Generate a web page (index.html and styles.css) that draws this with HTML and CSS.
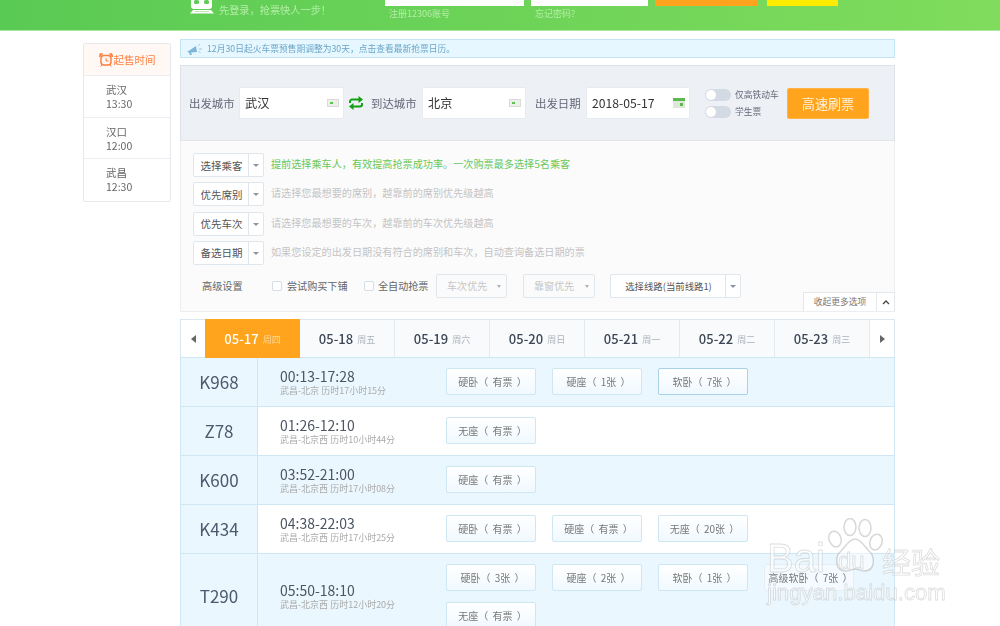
FILE: index.html
```html
<!DOCTYPE html>
<html lang="zh-CN">
<head>
<meta charset="utf-8">
<title>高速刷票</title>
<link rel="stylesheet" href="styles.css">
</head>
<body>
<header class="topbar">
  <div class="promo">
    <svg class="train-icon" viewBox="0 0 24 14" width="24" height="14"><path d="M1 0h21v6a3 3 0 0 1-3 3H4a3 3 0 0 1-3-3z" fill="#fff"/><rect x="4" y="0" width="5" height="4" rx="1.500" fill="#5fcd55"/><rect x="14" y="0" width="5" height="4" rx="1.500" fill="#5fcd55"/><path d="M0 13.500h24l-3-3.500H3z" fill="#fff"/><path d="M5 11h14v1H5z" fill="#bdeeb5"/></svg>
    <span>先登录，抢票快人一步！</span>
  </div>
  <div class="field field-user"><div class="field-box"></div><a>注册12306账号</a></div>
  <div class="field field-pass"><div class="field-box"></div><a>忘记密码?</a></div>
  <div class="top-btn top-orange"></div>
  <div class="top-btn top-yellow"></div>
</header>

<div class="page">
  <aside class="sale">
    <div class="sale-head">
      <svg viewBox="0 0 14 14" width="14" height="14"><rect x="2" y="2.500" width="10" height="9.500" rx="3" fill="none" stroke="#ff7f3f" stroke-width="1.500"/><path d="M7 5v3h2.500" fill="none" stroke="#ff7f3f"/><path d="M.5 4 3.500.8 1 .8zM13.500 4 10.500.8 13 .8zM3 12l-1.500 1.500M11 12l1.500 1.500" fill="#ff7f3f" stroke="#ff7f3f"/></svg>
      <span>起售时间</span>
    </div>
    <div class="sale-row">武汉<br>13:30</div>
    <div class="sale-row">汉口<br>12:00</div>
    <div class="sale-row">武昌<br>12:30</div>
  </aside>

  <main class="main">
    <div class="notice">
      <svg viewBox="0 0 16 12" width="16" height="12"><path d="M1 9 10 3l1 6-6 .5L6 12H4L3 9.500z" fill="#7db6d8"/><path d="M12 3l2-2M13 6h3M12.500 8.500l2 1" stroke="#9ccbe5" fill="none"/></svg>
      <span>12月30日起火车票预售期调整为30天，点击查看最新抢票日历。</span>
    </div>

    <section class="search">
      <label class="search-label">出发城市</label>
      <div class="search-input input-from"><span>武汉</span><i class="card-ico"></i></div>
      <svg class="swap" viewBox="0 0 14 14" width="14" height="14"><g fill="none" stroke="#12a012" stroke-width="2"><path d="M1 7V5.500a2 2 0 0 1 2-2h7"/><path d="M13 7v1.500a2 2 0 0 1-2 2H4"/></g><path d="M9.500 0 14 3.500 9.500 7zM4.500 7 0 10.500 4.500 14z" fill="#12a012"/></svg>
      <label class="search-label">到达城市</label>
      <div class="search-input"><span>北京</span><i class="card-ico"></i></div>
      <label class="search-label label-date">出发日期</label>
      <div class="search-input"><span>2018-05-17</span>
        <svg class="cal" viewBox="0 0 12 10" width="12" height="10"><rect width="12" height="10" fill="#dfe8d8"/><rect width="12" height="3" fill="#5bb94e"/><rect x="7" y="5" width="3" height="3" fill="#5bb94e"/></svg>
      </div>
      <div class="toggles">
        <div class="toggle-row"><i class="toggle"></i><span>仅高铁动车</span></div>
        <div class="toggle-row"><i class="toggle"></i><span>学生票</span></div>
      </div>
      <button class="go">高速刷票</button>
    </section>

    <section class="options">
      <div class="opt-row">
        <div class="split"><span class="split-main">选择乘客</span><span class="split-caret"></span></div>
        <p class="hint hint-green">提前选择乘车人，有效提高抢票成功率。一次购票最多选择5名乘客</p>
      </div>
      <div class="opt-row">
        <div class="split"><span class="split-main">优先席别</span><span class="split-caret"></span></div>
        <p class="hint">请选择您最想要的席别，越靠前的席别优先级越高</p>
      </div>
      <div class="opt-row">
        <div class="split"><span class="split-main">优先车次</span><span class="split-caret"></span></div>
        <p class="hint">请选择您最想要的车次，越靠前的车次优先级越高</p>
      </div>
      <div class="opt-row">
        <div class="split"><span class="split-main">备选日期</span><span class="split-caret"></span></div>
        <p class="hint">如果您设定的出发日期没有符合的席别和车次，自动查询备选日期的票</p>
      </div>
      <div class="adv">
        <span class="adv-title">高级设置</span>
        <span class="check check-a"><i></i>尝试购买下铺</span>
        <span class="check check-b"><i></i>全自动抢票</span>
        <span class="sel sel-a">车次优先</span>
        <span class="sel sel-b">靠窗优先</span>
        <div class="split split-line"><span class="split-main">选择线路(当前线路1)</span><span class="split-caret"></span></div>
      </div>
      <div class="collapse"><span class="collapse-text">收起更多选项</span><span class="collapse-arrow"><svg viewBox="0 0 8 5" width="8" height="5"><path d="M1 4l3-3 3 3" fill="none" stroke="#444" stroke-width="1.300"/></svg></span></div>
    </section>

    <nav class="tabs">
      <span class="tab-arrow"><i class="tri-left"></i></span>
      <a class="tab tab-on"><b>05-17</b><small>周四</small></a>
      <a class="tab"><b>05-18</b><small>周五</small></a>
      <a class="tab"><b>05-19</b><small>周六</small></a>
      <a class="tab"><b>05-20</b><small>周日</small></a>
      <a class="tab"><b>05-21</b><small>周一</small></a>
      <a class="tab"><b>05-22</b><small>周二</small></a>
      <a class="tab"><b>05-23</b><small>周三</small></a>
      <span class="tab-arrow tab-arrow-r"><i class="tri-right"></i></span>
    </nav>

    <div class="trains">
      <div class="train tint">
        <div class="no">K968</div>
        <div class="info"><div class="time">00:13-17:28</div><div class="sub">武昌-北京 历时17小时15分</div></div>
        <div class="seats"><span class="seat">硬卧（ 有票 ）</span><span class="seat">硬座（ 1张 ）</span><span class="seat seat-on">软卧（ 7张 ）</span></div>
      </div>
      <div class="train">
        <div class="no">Z78</div>
        <div class="info"><div class="time">01:26-12:10</div><div class="sub">武昌-北京西 历时10小时44分</div></div>
        <div class="seats"><span class="seat">无座（ 有票 ）</span></div>
      </div>
      <div class="train tint">
        <div class="no">K600</div>
        <div class="info"><div class="time">03:52-21:00</div><div class="sub">武昌-北京西 历时17小时08分</div></div>
        <div class="seats"><span class="seat">硬座（ 有票 ）</span></div>
      </div>
      <div class="train">
        <div class="no">K434</div>
        <div class="info"><div class="time">04:38-22:03</div><div class="sub">武昌-北京西 历时17小时25分</div></div>
        <div class="seats"><span class="seat">硬卧（ 有票 ）</span><span class="seat">硬座（ 有票 ）</span><span class="seat">无座（ 20张 ）</span></div>
      </div>
      <div class="train tint">
        <div class="no">T290</div>
        <div class="info"><div class="time">05:50-18:10</div><div class="sub">武昌-北京西 历时12小时20分</div></div>
        <div class="seats"><span class="seat">硬卧（ 3张 ）</span><span class="seat">硬座（ 2张 ）</span><span class="seat">软卧（ 1张 ）</span><span class="seat seat-faded">高级软卧（ 7张 ）</span><span class="seat">无座（ 有票 ）</span></div>
      </div>
    </div>
  </main>
</div>

<div class="watermark">
  <svg class="paw" viewBox="0 0 58 58" width="58" height="58"><g fill="rgba(255,255,255,.5)" stroke="rgba(140,140,140,.35)" stroke-width="1.500"><ellipse cx="9" cy="21" rx="6" ry="8" transform="rotate(-20 9 21)"/><ellipse cx="24" cy="9" rx="6" ry="8.500"/><ellipse cx="39" cy="10" rx="6" ry="8.500"/><ellipse cx="50" cy="24" rx="6" ry="8" transform="rotate(20 50 24)"/><path d="M29 21c-6 0-9 7-14 12-6 5-7 20 5 20 4 0 6-2 9-2s5 2 9 2c12 0 11-15 5-20-5-5-8-12-14-12z"/></g></svg>
  <span class="wm-bai">Bai</span>
  <span class="wm-du">du</span>
  <span class="wm-jy">经验</span>
  <span class="wm-url">jingyan.baidu.com</span>
</div>
</body>
</html>
```
FILE: styles.css
```css
* { box-sizing: border-box; }
html, body { margin: 0; height: 626px; overflow: hidden; background: #fff; }
body { position: relative; font-family: "Noto Sans CJK SC", "Open Sans", sans-serif; color: #555; font-size: 10.5px; }
a { text-decoration: none; }
i { display: block; font-style: normal; }
p { margin: 0; }
.topbar, .page, .watermark { filter: blur(.35px); }

/* top bar */
.topbar { height: 31px; display: flex; align-items: flex-start; padding-left: 190px; background: linear-gradient(90deg, #59ca54, #80dc5c); border-bottom: 1px solid #a9e89a; }
.promo { width: 195px; display: flex; align-items: flex-start; gap: 5px; color: #b4eda8; font-size: 10.2px; line-height: 16px; }
.promo span { margin-top: 1.5px; }
.train-icon { flex: none; }
.field a { display: block; padding-left: 4px; margin-top: 2px; font-size: 9px; line-height: 12px; color: #b4eda8; }
.field-box { height: 6px; background: #fff; }
.field-user { width: 139px; margin-right: 7px; }
.field-pass { width: 117px; margin-right: 7px; }
.top-btn { height: 6px; }
.top-orange { width: 103px; margin-right: 9px; background: #ffa41c; }
.top-yellow { width: 71px; background: #fdec00; }

/* page frame */
.page { display: flex; align-items: flex-start; padding: 8px 0 0 83px; gap: 9px; }

/* sale column */
.sale { width: 88px; margin-top: 4px; border: 1px solid #e5e8ec; border-radius: 2px; background: #fff; }
.sale-head { height: 32px; display: flex; align-items: center; justify-content: center; gap: 1px; background: #fff8f5; color: #ff7f3f; font-size: 10.5px; border-bottom: 1px solid #eceef1; }
.sale-row { height: 41.5px; padding: 7px 0 0 22px; font-size: 10.5px; line-height: 14px; color: #666; border-bottom: 1px solid #eceef1; }
.sale-row:last-child { border-bottom: 0; }

/* main column */
.main { width: 715px; }
.notice { height: 19px; display: flex; align-items: center; gap: 5px; padding-left: 5px; background: #e6f7ff; border: 1px solid #c3e5f4; color: #6aa6c8; font-size: 8.75px; }

/* search */
.search { height: 76px; margin-top: 7px; display: flex; align-items: center; padding: 0 25px 0 8px; background: #edf0f5; border: 1px solid #dde2e9; border-bottom-color: #e3e6ea; }
.search-label { width: 51px; font-size: 11.4px; color: #667; flex: none; }
.search-label:first-child { width: 50px; }
.search-input { width: 104px; height: 32px; flex: none; display: flex; align-items: center; justify-content: space-between; padding: 0 4px 0 5px; background: #fff; border: 1px solid #e7eaef; border-radius: 2px; font-size: 12.2px; color: #333; }
.input-from { width: 105px; }
.card-ico { position: relative; width: 12px; height: 8px; background: #edf0ea; border: 1px solid #d9dcd6; }
.card-ico::before { content: ""; position: absolute; left: 2px; top: 2px; width: 3px; height: 2px; background: #5bc44e; }
.swap { margin: 0 8px 0 5px; flex: none; }
.label-date { margin-left: 9px; }
.toggles { margin-left: 15px; width: 82px; flex: none; display: flex; flex-direction: column; gap: 5px; }
.toggle-row { height: 12px; display: flex; align-items: center; gap: 4px; font-size: 8.75px; color: #667; white-space: nowrap; }
.toggle { width: 26px; height: 12px; border-radius: 6px; background: #d3dae4; position: relative; flex: none; }
.toggle::before { content: ""; position: absolute; left: 1px; top: 1px; width: 10px; height: 10px; border-radius: 50%; background: #fff; }
.go { width: 82px; height: 31px; flex: none; padding: 0; border: 1px solid #ffb347; border-radius: 2px; background: #ffa41c; color: #fff3dc; font: inherit; font-size: 13.1px; }

/* options */
.options { position: relative; height: 171px; padding: 12px 0 0 12px; background: #fbfbfb; border: 1px solid #eceef1; border-top: 0; }
.opt-row { display: flex; align-items: center; gap: 7px; margin-bottom: 5.3px; }
.split { display: flex; height: 24px; flex: none; border: 1px solid #dfe6ec; border-radius: 2px; background: #fff; }
.split-main { display: flex; align-items: center; justify-content: center; width: 55px; padding-left: 1px; font-size: 10.5px; color: #555; border-right: 1px solid #dfe6ec; white-space: nowrap; }
.split-caret { position: relative; width: 14px; }
.split-caret::after { content: ""; position: absolute; left: 4px; top: 10px; border: 3px solid transparent; border-top: 3px solid #8a96a0; border-bottom: 0; }
.hint { margin-top: -3px; font-size: 10.15px; color: #c4c4c4; white-space: nowrap; }
.hint-green { color: #67c75b; }
.adv { display: flex; align-items: center; height: 24px; margin-top: 9px; color: #666; }
.adv-title { width: 79px; padding-left: 9px; flex: none; font-size: 10.2px; }
.check { display: flex; align-items: center; gap: 5px; white-space: nowrap; flex: none; font-size: 10.1px; }
.check i { width: 10px; height: 10px; border: 1px solid #d5dee6; border-radius: 2px; background: #fff; }
.check-a { width: 92px; }
.check-b { width: 72px; gap: 4px; }
.sel { display: flex; align-items: center; position: relative; width: 72px; height: 24px; padding-left: 10px; border: 1px solid #dfe6ec; border-radius: 2px; background: #fbfbfb; color: #c6c6c6; font-size: 10.1px; white-space: nowrap; flex: none; }
.sel::after { content: ""; position: absolute; right: 5px; top: 10px; border: 2.5px solid transparent; border-top: 3px solid #a9b3bb; border-bottom: 0; }
.sel-a { width: 71px; margin-right: 16px; }
.sel-b { margin-right: 15px; }
.split-line .split-main { width: 115px; font-size: 9.4px; }
.collapse { position: absolute; right: -1px; bottom: 0; width: 92px; height: 19px; display: flex; background: #fff; border: 1px solid #e3e8ec; border-bottom: 0; }
.collapse-text { width: 73px; border-right: 1px solid #e3e8ec; font-size: 8.75px; line-height: 17px; text-align: center; color: #777; }
.collapse-arrow { flex: 1; display: flex; align-items: center; justify-content: center; }

/* tabs */
.tabs { display: flex; height: 39px; margin-top: 7px; border: 1px solid #dbe8f0; border-bottom-color: #cfe6f3; background: #f8fafc; }
.tab-arrow { width: 24px; flex: none; display: flex; align-items: center; justify-content: center; background: #fff; }
.tab-arrow-r { width: 25px; border-left: 1px solid #e3eaf0; }
.tri-left { border: 4px solid transparent; border-right: 5px solid #666; border-left: 0; }
.tri-right { border: 4px solid transparent; border-left: 5px solid #666; border-right: 0; }
.tab { width: 95px; flex: none; display: flex; align-items: center; justify-content: center; gap: 4px; color: #3c4654; border-right: 1px solid #e3eaf0; }
.tab:nth-last-child(2) { border-right: 0; width: 94px; }
.tab b { font-size: 13px; font-weight: 500; }
.tab small { font-size: 9px; color: #aab2ba; padding-top: 2px; }
.tab-on { margin-top: -1px; height: 39px; background: #ffa41c; color: #fff; border-right: 0; }
.tab-on small { color: #ffd79a; }

/* train rows */
.trains { border-left: 1px solid #cfe6f3; border-right: 1px solid #cfe6f3; }
.train { display: flex; min-height: 49px; border-bottom: 1px solid #cfe6f3; background: #fff; }
.tint { background: #ebf7fe; }
.no { width: 77px; flex: none; display: flex; align-items: center; justify-content: center; padding-bottom: 2px; background: #ebf7fe; border-right: 1px solid #cfe6f3; font-size: 17px; color: #4c5a6e; }
.info { width: 188px; flex: none; display: flex; flex-direction: column; justify-content: center; padding-left: 22px; }
.time { font-size: 14px; line-height: 16px; color: #4c5563; }
.sub { font-size: 9px; line-height: 13px; color: #aaa; white-space: nowrap; }
.seats { width: 430px; display: flex; flex-wrap: wrap; gap: 11px 16px; padding: 10px 0; }
.seat { width: 90px; height: 27px; display: flex; align-items: center; justify-content: center; padding-left: 3px; border: 1px solid #cfe6f3; border-radius: 2px; background: linear-gradient(180deg, #fff, #f0f9ff); font-size: 10px; word-spacing: 2px; color: #777; white-space: pre; }
.seat-on { border-color: #a9d2e8; }
.seat-faded { border-color: #e3eef5; background: #f4faff; }

/* watermark */
.watermark { position: absolute; left: 765px; top: 518px; width: 185px; height: 90px; pointer-events: none; }
.watermark span { position: absolute; color: rgba(255,255,255,.55); -webkit-text-stroke: .8px rgba(150,150,150,.32); font-family: "Liberation Sans", sans-serif; white-space: nowrap; }
.paw { position: absolute; left: 61px; top: 0; }
.wm-bai { left: 2px; top: 20px; font-size: 40px; line-height: 40px; }
.wm-du { left: 73px; top: 29px; font-size: 24px; line-height: 28px; }
.watermark .wm-jy { left: 117px; top: 27px; font-size: 29px; line-height: 32px; font-family: "Noto Sans CJK SC", sans-serif; }
.wm-url { left: 2px; top: 62px; font-size: 22.2px; line-height: 26px; }
```
